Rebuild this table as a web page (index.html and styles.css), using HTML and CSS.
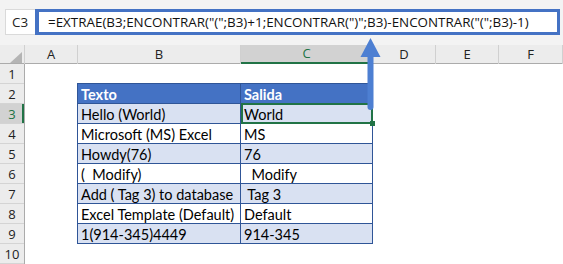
FILE: index.html
```html
<!DOCTYPE html>
<html lang="es">
<head>
    <meta charset="UTF-8">
    <title>EXTRAE entre paréntesis</title>
    <link rel="stylesheet" href="styles.css">
</head>
<body>
    <div class="xl-app">
        <div class="xl-formula-bar">
            <div class="xl-name-box">C3</div>
            <div class="xl-formula-input">=EXTRAE(B3;ENCONTRAR("(";B3)+1;ENCONTRAR(")";B3)-ENCONTRAR("(";B3)-1)</div>
        </div>

        <div class="xl-col-headers">
            <div class="xl-corner">
                <svg width="12" height="11" viewBox="0 0 12 11"><polygon points="12,0 12,11 0,11" fill="#b4b4b4"/></svg>
            </div>
            <div class="xl-col-head">A</div>
            <div class="xl-col-head">B</div>
            <div class="xl-col-head is-active">C</div>
            <div class="xl-col-head">D</div>
            <div class="xl-col-head">E</div>
            <div class="xl-col-head">F</div>
        </div>

        <div class="xl-body">
            <div class="xl-row-headers">
                <div class="xl-row-head">1</div>
                <div class="xl-row-head">2</div>
                <div class="xl-row-head is-active">3</div>
                <div class="xl-row-head">4</div>
                <div class="xl-row-head">5</div>
                <div class="xl-row-head">6</div>
                <div class="xl-row-head">7</div>
                <div class="xl-row-head">8</div>
                <div class="xl-row-head">9</div>
                <div class="xl-row-head">10</div>
            </div>

            <div class="xl-canvas">
                <div class="xl-table">
                    <div class="xl-cell xl-head">Texto</div>
                    <div class="xl-cell xl-head">Salida</div>

                    <div class="xl-cell xl-alt">Hello (World)</div>
                    <div class="xl-cell xl-alt is-selected">World<span class="xl-selection"></span></div>

                    <div class="xl-cell">Microsoft (MS) Excel</div>
                    <div class="xl-cell">MS</div>

                    <div class="xl-cell xl-alt">Howdy(76)</div>
                    <div class="xl-cell xl-alt">76</div>

                    <div class="xl-cell">(  Modify)</div>
                    <div class="xl-cell">  Modify</div>

                    <div class="xl-cell xl-alt">Add ( Tag 3) to database</div>
                    <div class="xl-cell xl-alt"> Tag 3</div>

                    <div class="xl-cell">Excel Template (Default)</div>
                    <div class="xl-cell">Default</div>

                    <div class="xl-cell xl-alt">1(914-345)4449</div>
                    <div class="xl-cell xl-alt">914-345</div>
                </div>
            </div>
        </div>

        <!-- flecha que apunta a la barra de fórmulas -->
        <svg class="xl-arrow" width="21" height="75" viewBox="0 0 21 75">
            <polygon points="10.5,2 0.5,21 20.5,21" fill="#4d7fd2"/>
            <path d="M7.5 20 H13.5 V71 A3 3 0 0 1 7.5 71 Z" fill="#4d7fd2"/>
        </svg>
    </div>
</body>
</html>
```

FILE: styles.css
```css
:root {
    --xl-blue: #4472c4;
    --xl-border: #2f5597;
    --xl-band: #d9e1f2;
    --xl-green: #217346;
    --xl-head-bg: #ececec;
    --xl-head-active: #d2d2d2;
}

* {
    margin: 0;
    padding: 0;
    box-sizing: border-box;
}

body {
    background: #ffffff;
    font-family: 'Open Sans', 'Noto Sans', Arial, sans-serif;
    color: #222;
}

.xl-app {
    position: relative;
    width: 563px;
    height: 264px;
    overflow: hidden;
}

/* barra de fórmulas */
.xl-formula-bar {
    height: 45px;
    background: #f3f3f3;
    padding: 9px 3px 0 5px;
    display: flex;
}

.xl-name-box {
    width: 30px;
    height: 26px;
    background: #fff;
    border: 1px solid #dadada;
    border-right: none;
    font-size: 13.4px;
    line-height: 24px;
    padding-left: 6px;
    color: #222;
}

.xl-formula-input {
    flex: 1;
    height: 26px;
    background: #fff;
    border: 3px solid var(--xl-blue);
    border-left-width: 4px;
    font-size: 13.4px;
    line-height: 20px;
    padding-left: 9px;
    color: #111;
    white-space: pre;
    overflow: hidden;
}

/* cabeceras */
.xl-col-headers {
    display: grid;
    grid-template-columns: 25px 53px 163px 132px 63px 63px 64px;
    height: 19px;
    background: var(--xl-head-bg);
    border-bottom: 1px solid #ababab;
}

.xl-corner {
    border-right: 1px solid #d0d0d0;
    display: flex;
    align-items: flex-end;
    justify-content: flex-end;
    padding: 0 2px 1px 0;
}

.xl-col-head {
    border-right: 1px solid #d0d0d0;
    text-align: center;
    font-size: 13px;
    line-height: 18px;
}

.xl-col-head.is-active {
    background: var(--xl-head-active);
    color: var(--xl-green);
    border-bottom: 2px solid var(--xl-green);
    line-height: 17px;
}

.xl-body {
    display: flex;
}

.xl-row-headers {
    width: 25px;
    background: var(--xl-head-bg);
    border-right: 1px solid #ababab;
}

.xl-row-head {
    height: 20px;
    border-bottom: 1px solid #d4d4d4;
    text-align: center;
    font-size: 13px;
    line-height: 21px;
}

.xl-row-head.is-active {
    background: var(--xl-head-active);
    color: var(--xl-green);
    box-shadow: inset -2px 0 0 var(--xl-green);
}

.xl-canvas {
    flex: 1;
}

/* tabla */
.xl-table {
    margin: 19px 0 0 52px;
    display: grid;
    grid-template-columns: 163px 132px;
    width: 296px;
    border-left: 1px solid var(--xl-border);
    border-top: 1px solid var(--xl-border);
}

.xl-cell {
    height: 20px;
    border-right: 1px solid var(--xl-border);
    border-bottom: 1px solid var(--xl-border);
    padding-left: 3px;
    font-family: 'Lato', 'Liberation Sans', sans-serif;
    font-size: 14.5px;
    line-height: 21px;
    color: #000;
    white-space: pre;
    overflow: hidden;
}

.xl-head {
    background: var(--xl-blue);
    color: #fff;
    font-weight: bold;
}

.xl-alt {
    background: var(--xl-band);
}

.xl-cell.is-selected {
    position: relative;
    overflow: visible;
}

.xl-selection {
    position: absolute;
    top: -1px;
    left: 0;
    right: -1px;
    bottom: -1px;
    border: 2px solid var(--xl-green);
}

.xl-selection::after {
    content: '';
    position: absolute;
    right: -4px;
    bottom: -4px;
    width: 5px;
    height: 5px;
    background: var(--xl-green);
}

.xl-arrow {
    position: absolute;
    left: 360px;
    top: 36px;
}
```
